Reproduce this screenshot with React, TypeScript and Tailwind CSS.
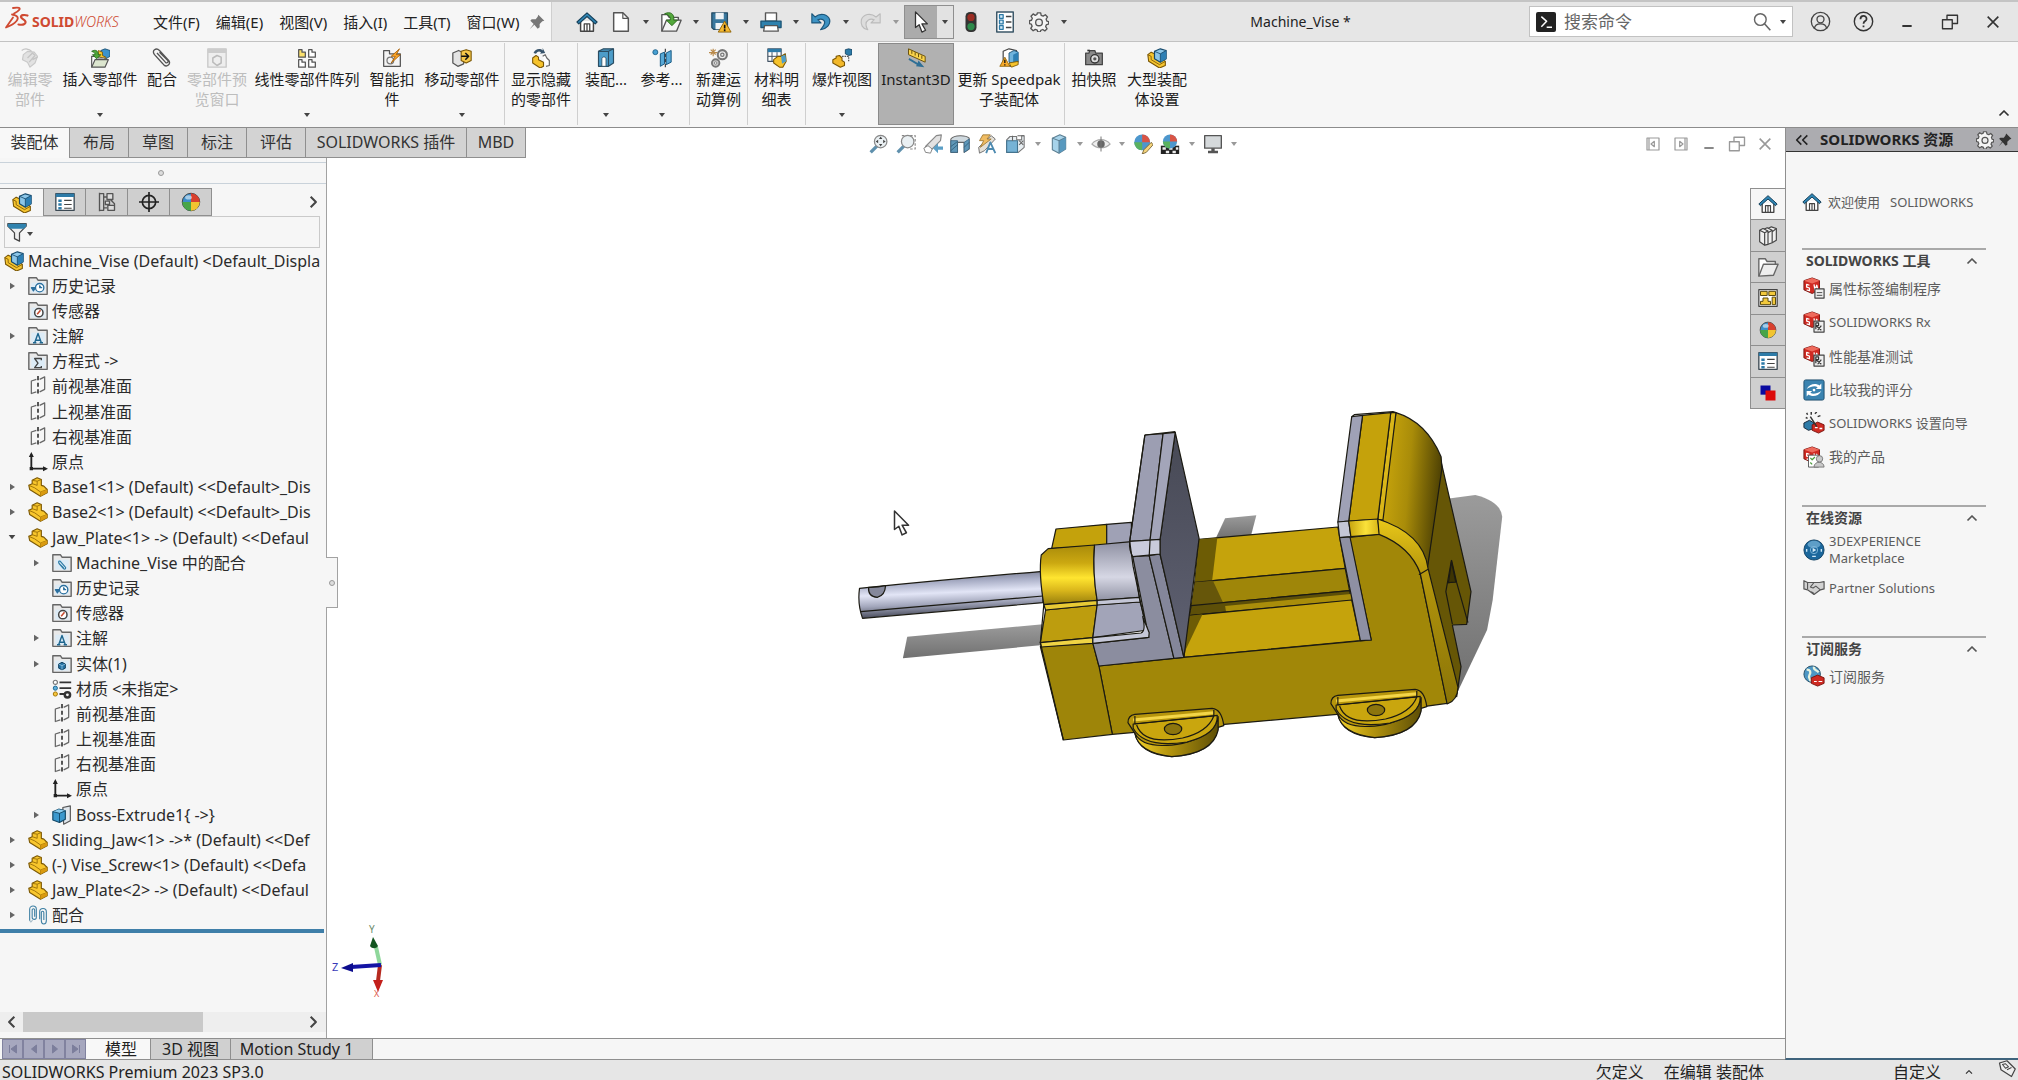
import React from "react";
import type { ReactNode } from "react";

/* ---------- icon primitives ---------- */

function Ico({ children, s = "size-5", vb = "0 0 24 24" }: { children: ReactNode; s?: string; vb?: string }) {
  return (
    <svg viewBox={vb} className={`${s} shrink-0`} fill="none" strokeLinejoin="round" aria-hidden="true">
      {children}
    </svg>
  );
}

const Caret = ({ dim = false }: { dim?: boolean }) => (
  <svg viewBox="0 0 6 4" className="h-1 w-1.5 shrink-0" aria-hidden="true">
    <path d="M0 0h6L3 4z" fill={dim ? "#999" : "#444"} />
  </svg>
);

const House = ({ s }: { s?: string }) => (
  <Ico s={s}>
    <path d="M5 11v11h14V11" fill="#fff" stroke="#444" strokeWidth="1.6" />
    <path d="M9 22v-8h6v8M12 14v8" stroke="#444" strokeWidth="1.4" />
    <path d="M12 2 1 12l2 2 9-8 9 8 2-2z" fill="#2f86b5" stroke="#17405a" strokeWidth="1.2" />
  </Ico>
);

const Asm = ({ s }: { s?: string }) => (
  <Ico s={s}>
    <path d="M1 8 5 5l4 2v5l6 4 4-2 3 2v5l-7 3L2 16z" fill="#f6c52f" stroke="#7a5604" strokeWidth="1.3" />
    <path d="M1 8l4 2v4l10 6 7-4" stroke="#7a5604" strokeWidth="1" />
    <path d="M9 4l7-3 7 2v10l-7 4-7-4z" fill="#8cc6e8" stroke="#174a6c" strokeWidth="1.4" />
    <path d="M16 7l7-4v10l-7 4z" fill="#2d7fb4" />
    <path d="M9 4l7 3 7-4M16 7v10" stroke="#174a6c" strokeWidth="1" />
  </Ico>
);

const Part = ({ s }: { s?: string }) => (
  <Ico s={s}>
    <path d="M1 10l4-2V4l6-3 5 2v7l3 1 4 4v4l-8 4L2 15z" fill="#f8c62c" stroke="#7d5a06" strokeWidth="1.4" />
    <path d="M1 10l7 3 7 5v5M5 8l6 2V5l5-2M5 4l6 1M15 18l8-3" stroke="#9a7008" strokeWidth="1.1" />
    <path d="M15 18l8-3v4l-8 4z" fill="#d99a10" />
  </Ico>
);

const Folder = ({ children, s }: { children?: ReactNode; s?: string }) => (
  <Ico s={s}>
    <path d="M1 2h9l2 3h11v17H1z" fill="#e9e9e9" stroke="#666" strokeWidth="1.7" />
    <path d="M4 8h16v12H4z" fill="#dcebf6" />
    {children}
  </Ico>
);
const FHistory = () => (
  <Folder>
    <circle cx="14" cy="14" r="5" fill="#fff" stroke="#2b6f9e" strokeWidth="1.6" />
    <path d="M14 11v3h3M4 14h5l-2.500 4z" stroke="#2b6f9e" strokeWidth="1.4" fill="#2b6f9e" />
  </Folder>
);
const FSensor = () => (
  <Folder>
    <circle cx="13" cy="14" r="5" fill="#fff" stroke="#444" strokeWidth="1.8" />
    <path d="M11 16l4-5" stroke="#c4482c" strokeWidth="1.8" />
  </Folder>
);
const FNote = () => (
  <Folder>
    <path d="M8 20l4-11 4 11M9.500 17h5M6 20h4M14 20h4" stroke="#20678f" strokeWidth="1.7" />
  </Folder>
);
const FEq = () => (
  <Folder>
    <path d="M16 11V9H8l4 5.500L8 20h8v-2" stroke="#444" strokeWidth="1.6" />
  </Folder>
);
const FMate = () => (
  <Folder>
    <path d="M8 12l6 7c2 1 3-1 2-2l-6-7c-2-1-3 1-1 3l5 5" stroke="#2b7aa5" strokeWidth="1.4" />
  </Folder>
);
const FBody = () => (
  <Folder>
    <path d="M8 12l4-2 4 2v5l-4 2-4-2z" fill="#2473a6" stroke="#12405f" strokeWidth="1.2" />
    <path d="M8 12l4 2 4-2M12 14v5" stroke="#a8d4ee" strokeWidth=".8" />
  </Folder>
);
const Plane = () => (
  <Ico>
    <path d="M10 4 4 6v15l6-2M14 4l6-3v15l-6 3" stroke="#666" strokeWidth="1.5" />
    <path d="M12 0v24" stroke="#222" strokeWidth="1.8" strokeDasharray="5 3" />
  </Ico>
);
const Origin = () => (
  <Ico>
    <path d="M4 3v17h17" stroke="#222" strokeWidth="2.200" />
    <path d="M4 0 1 6h6zM24 20l-6-3v6zM2 18h4v4H2z" fill="#222" />
  </Ico>
);
const Material = () => (
  <Ico>
    <path d="M9 4h14M9 11h14M9 18h6" stroke="#333" strokeWidth="2.200" />
    <circle cx="4" cy="4" r="2.500" stroke="#777" strokeWidth="1.4" fill="#fff" />
    <circle cx="4" cy="11" r="2.500" fill="#5fb0da" stroke="#206a96" strokeWidth="1.2" />
    <circle cx="4" cy="18" r="2.500" fill="#f7c63c" stroke="#a67808" strokeWidth="1.2" />
    <circle cx="18.500" cy="19" r="3.200" stroke="#333" strokeWidth="3" />
  </Ico>
);
const Extrude = () => (
  <Ico>
    <path d="M13 3l9-2v18l-8 4z" fill="#dfe6ec" stroke="#555" strokeWidth="1.4" />
    <path d="M1 8l7-3 8 2v10l-7 4-8-3z" fill="#3b98cd" stroke="#134867" strokeWidth="1.4" />
    <path d="M1 8l7-3 8 2-7 3z" fill="#8acbee" />
    <path d="M1 8l8 2 7-3M9 10v11" stroke="#134867" strokeWidth="1.1" />
  </Ico>
);
const Mates = () => (
  <Ico>
    <path d="M2 19V5c0-5 8-5 8 0v10c0 3-5 3-5 0V6c0-2 3-2 3 0v8" stroke="#3d7fa3" strokeWidth="1.3" />
    <path d="M2 18c0 3 3 3 3 0" stroke="#8aa7b8" strokeWidth="1.2" />
    <path d="M14 8c0-5 8-5 8 0v11c0 5-6 5-6 0V9c0-2 3-2 3 0v9M14 8v9" stroke="#3d7fa3" strokeWidth="1.3" />
  </Ico>
);

const ListBox = ({ s }: { s?: string }) => (
  <Ico s={s}>
    <path d="M1 2h22v20H1z" fill="#fff" stroke="#3d4a54" strokeWidth="1.6" />
    <path d="M1 2h22v4H1z" fill="#2d7ba8" />
    <path d="M4 9h4v3H4zM4 13.500h4v3H4zM4 18h4v3H4z" fill="#2d7ba8" />
    <path d="M11 10h9M11 15h9M11 19.500h9" stroke="#444" strokeWidth="1.4" />
  </Ico>
);
const Ball = ({ s }: { s?: string }) => (
  <Ico s={s}>
    <circle cx="12" cy="12" r="10.500" fill="#3d8ec9" stroke="#333" />
    <path d="M12 12V1.500A10.500 10.500 0 0 1 22.500 12z" fill="#d8402e" />
    <path d="M12 12h10.500A10.500 10.500 0 0 1 12 22.500z" fill="#f2c430" />
    <path d="M12 12v10.500A10.500 10.500 0 0 1 1.500 12z" fill="#48a548" />
    <ellipse cx="9" cy="6.500" rx="4" ry="2.500" fill="#fff" opacity=".55" />
  </Ico>
);
const Config = () => (
  <Ico>
    <path d="M3 1v22M3 2h5v20H3M8 6h4M8 19h4" stroke="#555" strokeWidth="1.6" />
    <path d="M12 2h7v7h-7zM10 11h5v4h-5zM13 16h8v6h-8zM16 9l5 5v2" fill="#ddd" stroke="#555" strokeWidth="1.6" />
  </Ico>
);
const Target = () => (
  <Ico>
    <circle cx="12" cy="12" r="8" stroke="#222" strokeWidth="2" />
    <path d="M12 0v24M0 12h24" stroke="#222" strokeWidth="2" />
  </Ico>
);
const Gear = ({ s }: { s?: string }) => (
  <Ico s={s}>
    <path
      d="M10 1h4l.6 3 2.400 1 2.600-1.700 2.600 2.700L20.500 8.500l1 2.500 2 .5v3l-2.500.6-1 2.400 1.700 2.600-2.700 2.600L16.500 21l-2.400 1-.6 2h-3l-.6-2.200-2.400-1L5 22.500 2.200 19.700 3.800 17l-1-2.400L.5 14v-3.500l2.500-.6 1-2.400L2.400 5 5 2.300 7.500 4 9.500 3z"
      fill="#f4f4f4"
      stroke="#555"
      strokeWidth="1.6"
    />
    <circle cx="12" cy="12.500" r="4" fill="#eee" stroke="#555" strokeWidth="1.6" />
  </Ico>
);
const Pin = ({ c = "#777", s = "size-4" }: { c?: string; s?: string }) => (
  <Ico s={s}>
    <path d="M14 1l9 9-3 1-4 4v5l-3 2-5-6-7 7 6-8-5-5 2-2h6l3-4z" fill={c} />
  </Ico>
);
const Cursor = ({ s }: { s?: string }) => (
  <Ico s={s}>
    <path d="M6 1v17l4-3 3 8 4-2-4-7h6z" fill="#fff" stroke="#333" strokeWidth="1.4" />
  </Ico>
);
const ChevR = () => (
  <Ico s="size-3.5">
    <path d="M8 3l9 9-9 9" stroke="#444" strokeWidth="3.500" />
  </Ico>
);
const ChevL = () => (
  <Ico s="size-3.5">
    <path d="M16 3l-9 9 9 9" stroke="#444" strokeWidth="3.500" />
  </Ico>
);
const ChevUp = ({ c = "#555", s = "size-3" }: { c?: string; s?: string }) => (
  <Ico s={s}>
    <path d="M3 17l9-9 9 9" stroke={c} strokeWidth="3.500" />
  </Ico>
);

/* ---------- quick access icons ---------- */

const NewDoc = () => (
  <Ico s="size-[22px]">
    <path d="M4 2h10l6 6v14H4z" fill="#fff" stroke="#555" strokeWidth="1.6" />
    <path d="M14 2v6h6" stroke="#555" strokeWidth="1.3" />
  </Ico>
);
const OpenDoc = () => (
  <Ico s="size-[22px]">
    <path d="M2 22V4h6l2 3h10v4" fill="#fff" stroke="#555" strokeWidth="1.5" />
    <path d="M2 22 7 10h16l-5 12z" fill="#f4f4f4" stroke="#555" strokeWidth="1.5" />
    <path d="M5 3c6-3 11 0 10 7h4l-6 6-6-6h4c1-3-1-6-6-7z" fill="#54a83c" stroke="#2b6b1d" />
  </Ico>
);
const Save = () => (
  <Ico s="size-[22px]">
    <path d="M2 2h17v18H4l-2-2z" fill="#39789e" stroke="#234b63" strokeWidth="1.4" />
    <path d="M6 2h9v7H6zM6 13h9v7H6z" fill="#eef3f6" />
    <path d="M16 11l7 12H9z" fill="#f7b92f" stroke="#8f6407" />
    <path d="M16 15v4M16 20v2" stroke="#111" strokeWidth="1.8" />
  </Ico>
);
const Print = () => (
  <Ico s="size-[22px]">
    <path d="M6 2h12v9H6z" fill="#fff" stroke="#555" strokeWidth="1.5" />
    <path d="M1 11h22v7H1z" fill="#2f82ae" stroke="#1b5475" strokeWidth="1.4" />
    <path d="M5 16h14l1 6H4z" fill="#fff" stroke="#555" strokeWidth="1.4" />
  </Ico>
);
const Undo = () => (
  <Ico s="size-[22px]">
    <path d="M2 3v10h10L8.500 9.500c5-2 9 1 7 5-1 3-3 4-4 6 7-1 11-6 10-11-2-6-10-8-16-3z" fill="#3d93c4" stroke="#1c567a" strokeWidth="1.2" />
  </Ico>
);
const Redo = () => (
  <Ico s="size-[22px]">
    <path d="M22 3v10H12l3.500-3.500c-5-2-9 1-9 5 0 3 1 4 2 6-6-1-8-6-7-11 2-6 10-8 16-3z" fill="#ddd" stroke="#bbb" strokeWidth="1.2" />
  </Ico>
);
const Traffic = () => (
  <Ico s="size-[22px]">
    <rect x="6" y="1" width="12" height="22" rx="5" fill="#333" />
    <circle cx="12" cy="7" r="4" fill="#9c2d24" />
    <circle cx="12" cy="17" r="4" fill="#2e8a4b" />
  </Ico>
);
const OptList = () => (
  <Ico s="size-[22px]">
    <path d="M3 1h18v22H3z" fill="#fff" stroke="#3b5768" strokeWidth="1.6" />
    <path d="M6 4h4v4H6zM6 10h4v4H6zM6 16h4v4H6z" fill="#d5ebf7" stroke="#2b79a6" strokeWidth="1.4" />
    <path d="M13 6h6M13 12h6M13 18h6" stroke="#444" strokeWidth="1.8" />
  </Ico>
);

/* ---------- ribbon icons ---------- */

const IEdit = () => (
  <Ico>
    <path d="M4 8l5-4 8 1 4 5-3 8-6 5-3-6-6-3z" fill="#e2e2e2" stroke="#c9c9c9" strokeWidth="1.4" />
    <path d="M2 3c4-3 9-2 12 1M9 12l6-6 3 3-7 8M15 14l6-3" stroke="#c4c4c4" strokeWidth="1.5" />
  </Ico>
);
const IInsert = () => (
  <Ico>
    <path d="M13 3l5-2 6 2v7l-5 3-6-3z" fill="#3b93cb" stroke="#174a6c" />
    <path d="M10 3l5 2v4l4 2v3l-9-4z" fill="#f5c42d" stroke="#7a5604" />
    <path d="M2 23V10h6l2 2h8v3" fill="#fff" stroke="#555" strokeWidth="1.4" />
    <path d="M2 23l4-9h16l-4 9z" fill="#dce6cf" stroke="#555" strokeWidth="1.4" />
    <path d="M2 4c5-3 8 0 8 4h3l-5 5-5-5h3c0-2-1-3-4-4z" fill="#4fa63a" stroke="#24651a" />
  </Ico>
);
const IClip = () => (
  <Ico>
    <path d="M5 10l9 10c4 4 9-1 6-5L9 3C5-1-1 3 3 8l10 11M6 6l10 11c2 2 4 0 3-2L9 5" stroke="#555" strokeWidth="1.6" />
  </Ico>
);
const IPreview = () => (
  <Ico>
    <path d="M1 1h22v22H1z" fill="#eee" stroke="#c8c8c8" strokeWidth="1.6" />
    <path d="M1 1h22v5H1z" fill="#ccc" />
    <path d="M7 12l5-3 5 2v7l-5 3-5-4z" stroke="#bbb" strokeWidth="1.8" />
  </Ico>
);
const IPattern = () => (
  <Ico>
    <path d="M2 2h4v3h4v6H2z" fill="#fbe06c" stroke="#555" strokeWidth="1.5" />
    <path d="M14 2h4v3h4v6h-8zM2 14h4v3h4v6H2zM14 14h4v3h4v6h-8z" fill="#fff" stroke="#555" strokeWidth="1.5" />
  </Ico>
);
const ISmart = () => (
  <Ico>
    <path d="M2 3h7v4h13v15H2z" fill="#f4f4f4" stroke="#555" strokeWidth="1.5" />
    <circle cx="10" cy="15" r="4" stroke="#777" strokeWidth="1.5" />
    <path d="M21 1 11 10h5l-5 8 11-10h-5z" fill="#ffa92a" stroke="#a45c05" />
  </Ico>
);
const IMove = () => (
  <Ico>
    <path d="M1 6l7-3 6 3v13l-7 3-6-4z" fill="#e4e4e4" stroke="#555" strokeWidth="1.5" />
    <path d="M11 4l6-2 6 2v11l-6 3-6-3z" fill="#f6c84a" stroke="#7a5604" strokeWidth="1.3" />
    <path d="M11 10h8M16 6l4 4-4 4" stroke="#111" strokeWidth="1.8" />
  </Ico>
);
const IShow = () => (
  <Ico>
    <path d="M3 6c2-5 8-6 11-3V0l3 6-6 1 1-2c-3-2-5 0-6 2z" fill="#37536b" />
    <path d="M2 12l4-3 3 2v3l6 3v5l-4 2-9-6z" fill="#f6c32c" stroke="#7a5604" strokeWidth="1.3" />
    <path d="M14 10l3-2 2 4 3 3v6l-4 1" fill="#fff" stroke="#666" strokeWidth="1.4" />
  </Ico>
);
const IFeat = () => (
  <Ico>
    <path d="M3 4l6-3h12v17l-6 4H3z" fill="#4d9dc9" stroke="#2b4d62" strokeWidth="1.4" />
    <path d="M3 4h12v18M15 4l6-3" stroke="#2b4d62" strokeWidth="1.3" />
    <path d="M7 22v-9c0-3 5-3 5 0v9z" fill="#fff" stroke="#2b4d62" />
  </Ico>
);
const IRef = () => (
  <Ico>
    <circle cx="4" cy="5" r="3" fill="#47a0d2" stroke="#1b5d86" />
    <path d="M10 7l5-2v14l-5 3zM17 6l6-3v14l-6 3z" fill="#58a9d7" stroke="#1b5d86" strokeWidth="1.2" />
    <path d="M16 1v23" stroke="#333" strokeDasharray="4 2" strokeWidth="1.3" />
  </Ico>
);
const IMotion = () => (
  <Ico>
    <circle cx="16" cy="8" r="5.500" fill="#eee" stroke="#777" strokeWidth="2.500" />
    <circle cx="16" cy="8" r="2" stroke="#777" strokeWidth="1.5" />
    <circle cx="8" cy="18" r="4.500" fill="#ccc" stroke="#777" strokeWidth="2.200" />
    <circle cx="8" cy="18" r="1.500" fill="#fff" stroke="#777" />
    <path d="M5 1v9M0 5.500h10M2 2l6 6M8 2 2 8" stroke="#b98a4b" strokeWidth="1.4" />
  </Ico>
);
const IBom = () => (
  <Ico>
    <path d="M1 1h16v15H1z" fill="#fff" stroke="#456" strokeWidth="1.4" />
    <path d="M1 1h16v4H1z" fill="#2d7ba8" />
    <path d="M1 10h16M6 5v11M12 5v11" stroke="#456" strokeWidth="1.2" />
    <path d="M8 14l5-4 4 0 5-3 1 9-4 7-4 0-7-5z" fill="#f6c32c" stroke="#7a5604" strokeWidth="1.3" />
    <path d="M17 10l5-2 1 8-5 3z" fill="#4d9dc9" />
  </Ico>
);
const IExplode = () => (
  <Ico>
    <path d="M1 14l4-2v-2l4-1 3 3v3l3 2v4l-5 2-9-5z" fill="#f2b82a" stroke="#7a5604" strokeWidth="1.3" />
    <path d="M16 2l4-1 4 1v6l-4 1-4-2z" fill="#2d7ba8" stroke="#12405f" />
    <path d="M12 10h8v7" stroke="#555" strokeDasharray="2 1" strokeWidth="1.5" />
  </Ico>
);
const IInstant = () => (
  <Ico>
    <path d="M3 1l20 9v7L3 8z" fill="#fbd44a" stroke="#6b5310" strokeWidth="1.2" />
    <path d="M7 3v4M11 5v4M15 7v4M19 9v4" stroke="#6b5310" strokeWidth="1.2" />
    <path d="M4 12l10 6 1-3 7 8-10-1 1-2-10-6z" fill="#2f6f96" />
  </Ico>
);
const ISpeed = () => (
  <Ico>
    <path d="M5 4l7-3 9 2v14l-7 5-9-4z" fill="#fff" stroke="#444" strokeWidth="1.4" />
    <path d="M12 6l6-3 5 2v12l-6 2-5-2z" fill="#6fb3dc" stroke="#174a6c" />
    <path d="M17 8l6-3v12l-6 2z" fill="#2d7fb4" />
    <path d="M12 18l11-2v4l-8 3z" fill="#f5c32c" stroke="#7a5604" />
    <path d="M7 11l6 11H1z" fill="#f7a928" stroke="#8f6407" />
    <path d="M7 14v4M7 19.500v1.500" stroke="#111" strokeWidth="1.6" />
  </Ico>
);
const ICamera = () => (
  <Ico>
    <path d="M2 6h4l1-3h6l1 3h8v14H2z" fill="#8a8a8a" stroke="#444" strokeWidth="1.5" />
    <path d="M4 3h3" stroke="#333" strokeWidth="2" />
    <circle cx="13" cy="13" r="5" fill="#ddd" stroke="#333" strokeWidth="1.6" />
    <circle cx="13" cy="13" r="2" fill="#555" />
  </Ico>
);

/* ---------- heads-up view icons ---------- */

const Mag = ({ area = false }: { area?: boolean }) => (
  <Ico>
    {area && <path d="M7 2h16v16h-6" stroke="#888" strokeDasharray="3 2" strokeWidth="1.4" />}
    <path d="M10 14l-8 8" stroke="#5f90ad" strokeWidth="4" />
    <circle cx="14" cy="9" r="7.500" fill="#eaf0f3" stroke="#888" strokeWidth="1.5" />
    {!area && <path d="M14 3l2 3h-4zM14 15l2-3h-4zM8 9l3-2v4zM20 9l-3-2v4z" fill="#444" />}
  </Ico>
);
const HPrev = () => (
  <Ico>
    <path d="M3 15 16 2l6-1-1 7L9 20z" fill="#e2e2e2" stroke="#888" strokeWidth="1.4" />
    <path d="M1 17l5-3 5 4-2 5-6-1z" fill="#fff" stroke="#888" strokeWidth="1.2" />
    <path d="M24 15h-6v-4l-6 6 6 6v-4h6z" fill="#5b9fc6" />
  </Ico>
);
const HSection = () => (
  <Ico>
    <path d="M1 6c4-5 18-5 22-1v13l-6 4V10H9v12H1z" fill="#cfd9df" stroke="#666" strokeWidth="1.3" />
    <path d="M1 8h8v14H1zM17 10l6-4v12l-6 4z" fill="#5f97b8" stroke="#3a6885" />
    <path d="M1 15l8-6M1 20l8-7M17 16l6-6" stroke="#2d5d7a" />
  </Ico>
);
const HAnno = () => (
  <Ico>
    <path d="M2 16 17 2l5 4L9 20l-6 3z" fill="#e4e0d8" stroke="#777" strokeWidth="1.2" />
    <path d="M7 1h9l-4 5h5L4 16l4-8H3z" fill="#f0bc62" stroke="#9a7530" />
    <path d="M11 23l5-13 6 13M13 18h7" stroke="#4c8ab0" strokeWidth="2.200" />
  </Ico>
);
const HOrient = () => (
  <Ico>
    <path d="M2 7l4-4h8v4h6V2h3v14l-7 6H2z" fill="#e7eef2" stroke="#777" strokeWidth="1.3" />
    <path d="M2 8h13v14H2z" fill="#76b3d6" stroke="#44748f" strokeWidth="1.3" />
    <path d="M9 8V2M15 2h8M17 8l5 5M22 8l-5 5" stroke="#666" strokeWidth="1.3" />
  </Ico>
);
const HCube = () => (
  <Ico>
    <path d="M4 5l9-4 7 3v14l-8 5-8-4z" fill="#a7d3ea" stroke="#5c7f92" strokeWidth="1.3" />
    <path d="M12 8l8-4v14l-8 5z" fill="#5899bf" />
    <path d="M4 5l8 3 8-4M12 8v15" stroke="#5c7f92" strokeWidth="1.2" />
  </Ico>
);
const HEye = () => (
  <Ico>
    <path d="M1 12c6-7 16-7 22 0-6 6-16 6-22 0z" fill="#eee" stroke="#aaa" strokeWidth="1.3" />
    <circle cx="12" cy="12" r="4.500" fill="#666" />
    <path d="M12 3v18" stroke="#777" strokeWidth="1.2" />
  </Ico>
);
const HAppear = () => (
  <Ico>
    <circle cx="11" cy="10" r="9.500" fill="#4d97cd" />
    <path d="M11 10V.5A9.500 9.500 0 0 1 20.500 10z" fill="#d95445" />
    <path d="M11 10v9.500A9.500 9.500 0 0 1 1.500 10z" fill="#5ab160" />
    <path d="M22 10l2 3-8 9-5 2 2-5z" fill="#f5d47c" stroke="#6e5a2a" />
  </Ico>
);
const HScene = () => (
  <Ico>
    <path d="M1 14h22v10H1z" fill="#222" />
    <path d="M3 16h4v3H3zM11 16h4v3h-4zM19 16h3v3h-3zM7 20h4v3H7zM15 20h4v3h-4z" fill="#eee" />
    <circle cx="12" cy="9" r="8.500" fill="#4d97cd" />
    <path d="M12 9V.5A8.500 8.500 0 0 1 20.500 9z" fill="#d95445" />
    <path d="M12 9v8.500A8.500 8.500 0 0 1 3.500 9z" fill="#5ab160" />
  </Ico>
);
const HScreen = () => (
  <Ico>
    <path d="M2 2h20v15H2z" fill="#d5d9db" stroke="#555" strokeWidth="1.6" />
    <path d="M10 17h4v3h4v3H6v-3h4z" fill="#555" />
  </Ico>
);

/* ---------- task pane icons ---------- */

const Books = () => (
  <Ico>
    <path d="M12 3l4-2 6 2v14l-5 3" fill="#f0f0f0" stroke="#444" strokeWidth="1.4" />
    <path d="M7 4l4-2 6 3v15l-5 2" fill="#f0f0f0" stroke="#444" strokeWidth="1.4" />
    <path d="M2 5l4-2 6 3v16l-4 1-6-4z" fill="#f0f0f0" stroke="#444" strokeWidth="1.4" />
    <path d="M2 5l6 3v15M8 8l4-2M12 8l5-3M17 7l5-4" stroke="#444" strokeWidth="1.4" />
  </Ico>
);
const OpenFolder = () => (
  <Ico s="size-[22px]">
    <path d="M2 22V3h7l2 3h9v3" fill="#fff" stroke="#666" strokeWidth="1.5" />
    <path d="M2 22 7 9h16l-5 12z" fill="#eee" stroke="#666" strokeWidth="1.5" />
  </Ico>
);
const Palette = () => (
  <Ico>
    <path d="M1 2h22v20H1z" fill="#fff" stroke="#444" strokeWidth="1.5" />
    <path d="M3 4h8v5H3zM13 4h8v5h-8zM6 12h6v4h3v4H3v-4h3zM17 11h4v9h-4z" fill="#f2c93c" stroke="#5a4a10" strokeWidth="1.2" />
  </Ico>
);
const Squares = () => (
  <Ico>
    <path d="M3 3h12v11H3z" fill="#0a0aa0" />
    <path d="M9 9h12v12H9z" fill="#dc0a0a" />
  </Ico>
);
const SwCube = ({ children }: { children?: ReactNode }) => (
  <Ico s="size-[22px]">
    <path d="M1 4l9-3 8 3v10l-8 4-9-4z" fill="#cf2a22" stroke="#7a120d" />
    <path d="M1 4l9 3 8-3-8-3z" fill="#ee6a5c" />
    <path d="M7 9 4 8v3l3 1v3l-3-1M12 8l1 6 2-5 1 4" stroke="#fff" strokeWidth="1.4" />
    {children}
  </Ico>
);
const SwTag = () => (
  <SwCube>
    <path d="M13 13h10v10H13z" fill="#eee" stroke="#444" strokeWidth="1.3" />
    <path d="M15 17h6M15 20h6" stroke="#444" />
  </SwCube>
);
const SwRx = () => (
  <SwCube>
    <path d="M12 11h11v12H12z" fill="#eee" stroke="#444" strokeWidth="1.3" />
    <path d="M14 20v-7h3v3h-3l6 5M20 16l-4 5" stroke="#333" strokeWidth="1.3" />
  </SwCube>
);
const SwWiz = () => (
  <Ico s="size-[22px]">
    <path d="M1 12l6-3 5 3v6l-6 2-5-3z" fill="#2d7ba8" stroke="#123" />
    <path d="M10 14l6-3 7 3v6l-6 3-7-3z" fill="#cf2a22" stroke="#7a120d" />
    <path d="M13 17h3M18 18h3" stroke="#fff" strokeWidth="1.4" />
    <path d="M8 5l7 11M4 1l1 2M9 0v3M13 2l2-2M16 5l3-1M3 6l2 1" stroke="#333" strokeWidth="1.6" />
  </Ico>
);
const SwUser = () => (
  <SwCube>
    <path d="M6 10h11v13H6z" fill="#fff" stroke="#555" />
    <path d="M8 13l2 2 3-3M8 18l2 2" stroke="#4a9a3a" strokeWidth="1.3" />
    <circle cx="18" cy="14" r="3.500" fill="#c9c9c9" stroke="#777" />
    <path d="M12 23c0-7 11-7 11 0z" fill="#c9c9c9" stroke="#777" />
  </SwCube>
);
const Compare = () => (
  <Ico s="size-[22px]">
    <rect x="1" y="1" width="22" height="22" rx="2" fill="#3a83b0" stroke="#1c4d6c" />
    <path d="M4 11c3-6 10-7 14-4l2-2v6h-6l2-2c-3-2-7-1-12 2zM20 13c-3 6-10 7-14 4l-2 2v-6h6l-2 2c3 2 7 1 12-2z" fill="#fff" />
    <circle cx="12" cy="12" r="1.500" fill="#fff" />
  </Ico>
);
const Globe = () => (
  <Ico s="size-[22px]">
    <circle cx="12" cy="12" r="11" fill="#1b679c" stroke="#0f3f63" />
    <ellipse cx="12" cy="6" rx="7" ry="4" fill="#8cc3e4" opacity=".6" />
    <circle cx="12" cy="12" r="4" stroke="#7fb6d9" />
    <path d="M10.500 9.500v5l4-2.500z" fill="#cfe8f7" />
    <path d="M4 11v3M20 11v3M10 19h4" stroke="#cfe8f7" strokeWidth="1.5" />
  </Ico>
);
const Hands = () => (
  <Ico s="size-[22px]">
    <path d="M1 4l4 2 6 0 7 0 5-1v8l-4 1-7 5-7-5-4-1z" fill="#d2d2d2" stroke="#555" strokeWidth="1.3" />
    <path d="M12 6l-4 5 3 1 3-2 5 4M9 16l3 2M5 6v7" stroke="#555" strokeWidth="1.2" />
  </Ico>
);
const GlobeSw = () => (
  <Ico s="size-[22px]">
    <circle cx="10" cy="10" r="9" fill="#4d97c5" stroke="#234b63" />
    <path d="M4 5c4 0 5 3 3 6s2 5 1 7M12 2c-1 4 3 3 5 6" stroke="#e8f3e0" strokeWidth="2.500" />
    <path d="M9 14l7-3 7 3v6l-7 3-7-3z" fill="#cf2a22" stroke="#7a120d" />
    <path d="M12 18h3M17 18h4" stroke="#fff" strokeWidth="1.3" />
  </Ico>
);

const WinMin = ({ c }: { c: string }) => (
  <Ico s="size-4">
    <path d="M5 18h14" stroke={c} strokeWidth="3" />
  </Ico>
);
const WinRestore = ({ c }: { c: string }) => (
  <Ico s="size-[18px]">
    <path d="M8 9V3h14v11h-7M2 9h13v12H2z" stroke={c} strokeWidth="1.8" />
  </Ico>
);
const WinClose = ({ c }: { c: string }) => (
  <Ico s="size-4">
    <path d="M4 4l16 16M20 4 4 20" stroke={c} strokeWidth="2.400" />
  </Ico>
);

/* ---------- title bar ---------- */

const menus = ["文件(F)", "编辑(E)", "视图(V)", "插入(I)", "工具(T)", "窗口(W)"];

function QBtn({ label, w = "w-[34px]", children }: { label: string; w?: string; children: ReactNode }) {
  return (
    <button type="button" aria-label={label} className={`${w} flex h-8 shrink-0 items-center justify-center`}>
      {children}
    </button>
  );
}
const Drop = ({ dim = false }: { dim?: boolean }) => (
  <button type="button" aria-label="更多" className="flex h-8 w-4 shrink-0 items-center justify-center">
    <Caret dim={dim} />
  </button>
);

function TitleBar() {
  return (
    <header className="flex h-[42px] items-stretch border-t-2 border-b border-t-[#c4c4c4] border-b-[#c2c2c2] bg-[#e6e6e6]">
      <div className="flex w-[552px] shrink-0 items-center border-r border-[#cfcfcf] bg-[#f6f6f6] pl-1">
        <svg viewBox="0 0 26 24" className="mb-2 h-6 w-[26px]" fill="none" stroke="#cf4a32" strokeLinecap="round" strokeLinejoin="round" aria-hidden="true">
          <path d="M9 2c6-1 8 0 6 2-1 1.500-3 2.500-5 3.500" strokeWidth="1.8" />
          <path d="M8 8.500c6 1 7 3.500 4.500 6.500C10 18 6 20 2 21.500L9 11.500" strokeWidth="1.8" />
          <path d="M23.500 9.500c-3-1-7-.5-6.500 1.500.5 2.500 5 2.500 4.500 5.500-.5 2-4 2.500-7 2" strokeWidth="2.200" />
        </svg>
        <span className="w-[95px] pl-0.5 text-sm leading-5 text-[#cf4a32]">
          <b>SOLID</b>
          <i className="font-light">WORKS</i>
        </span>
        <nav className="flex gap-4 pl-7 text-[15px] leading-5">
          {menus.map((m) => (
            <button type="button" key={m} className="whitespace-nowrap">
              {m}
            </button>
          ))}
        </nav>
        <span className="ml-auto pr-1.5">
          <Pin />
        </span>
      </div>
      <div className="flex items-center pl-[18px]">
        <QBtn label="主页"><House s="size-[22px]" /></QBtn>
        <QBtn label="新建"><NewDoc /></QBtn>
        <Drop />
        <QBtn label="打开"><OpenDoc /></QBtn>
        <Drop />
        <QBtn label="保存"><Save /></QBtn>
        <Drop />
        <QBtn label="打印"><Print /></QBtn>
        <Drop />
        <QBtn label="撤消"><Undo /></QBtn>
        <Drop />
        <QBtn label="重做"><Redo /></QBtn>
        <Drop dim />
        <div className="flex border border-[#8f8f8f] bg-[#e2e2e2]">
          <button type="button" aria-label="选择" className="flex h-8 w-8 items-center justify-center bg-[#ababab]">
            <Cursor s="size-[22px]" />
          </button>
          <Drop />
        </div>
        <QBtn label="重建模型"><Traffic /></QBtn>
        <QBtn label="文件属性"><OptList /></QBtn>
        <QBtn label="选项"><Gear s="size-5" /></QBtn>
        <Drop />
      </div>
      <div className="flex flex-1 items-center justify-center text-sm">
        <h1 className="whitespace-nowrap">Machine_Vise *</h1>
      </div>
      <div className="flex items-center">
        <label className="flex h-[31px] w-[264px] items-center border border-[#c2c2c2] bg-white px-1.5">
          <span className="flex size-5 shrink-0 items-center justify-center rounded-xs bg-[#222]">
            <Ico s="size-4">
              <path d="M5 4l8 7-8 8M13 20h8" stroke="#fff" strokeWidth="2.200" />
            </Ico>
          </span>
          <input aria-label="搜索命令" placeholder="搜索命令" className="w-full min-w-0 px-2 text-[17px] leading-6 outline-none placeholder:text-[#666]" />
          <Ico s="size-5">
            <circle cx="10" cy="9" r="7" stroke="#666" strokeWidth="1.7" />
            <path d="M15 14l7 8" stroke="#666" strokeWidth="1.9" />
          </Ico>
          <span className="pl-2"><Caret /></span>
        </label>
        <div className="flex items-center pr-1 pl-1.5">
          <QBtn w="w-[43px]" label="登录">
            <Ico s="size-[21px]">
              <circle cx="12" cy="12" r="10.500" stroke="#444" strokeWidth="1.5" />
              <circle cx="12" cy="9.500" r="4" stroke="#444" strokeWidth="1.5" />
              <path d="M5 20c1-7 13-7 14 0" stroke="#444" strokeWidth="1.5" />
            </Ico>
          </QBtn>
          <QBtn w="w-[43px]" label="帮助">
            <Ico s="size-[21px]">
              <circle cx="12" cy="12" r="10.500" stroke="#333" strokeWidth="1.6" />
              <path d="M8.500 9.500c0-5 7-5 7-.5 0 2.500-3.500 2.500-3.500 5.500M12 16.500v2" stroke="#333" strokeWidth="2" />
            </Ico>
          </QBtn>
          <QBtn w="w-[43px]" label="最小化"><WinMin c="#333" /></QBtn>
          <QBtn w="w-[43px]" label="还原"><WinRestore c="#333" /></QBtn>
          <QBtn w="w-[43px]" label="关闭"><WinClose c="#333" /></QBtn>
        </div>
      </div>
    </header>
  );
}

/* ---------- ribbon ---------- */

type Cmd = { icon: ReactNode; lines: string[]; w: string; drop?: boolean; off?: boolean; on?: boolean };
const groups: Cmd[][] = [
  [
    { icon: <IEdit />, lines: ["编辑零", "部件"], w: "w-[60px]", off: true },
    { icon: <IInsert />, lines: ["插入零部件"], w: "w-[80px]", drop: true },
    { icon: <IClip />, lines: ["配合"], w: "w-[44px]" },
    { icon: <IPreview />, lines: ["零部件预", "览窗口"], w: "w-[66px]", off: true },
    { icon: <IPattern />, lines: ["线性零部件阵列"], w: "w-[114px]", drop: true },
    { icon: <ISmart />, lines: ["智能扣", "件"], w: "w-[56px]" },
    { icon: <IMove />, lines: ["移动零部件"], w: "w-[84px]", drop: true },
  ],
  [{ icon: <IShow />, lines: ["显示隐藏", "的零部件"], w: "w-[72px]" }],
  [
    { icon: <IFeat />, lines: ["装配..."], w: "w-[56px]", drop: true },
    { icon: <IRef />, lines: ["参考..."], w: "w-[55px]", drop: true },
  ],
  [{ icon: <IMotion />, lines: ["新建运", "动算例"], w: "w-[57px]" }],
  [{ icon: <IBom />, lines: ["材料明", "细表"], w: "w-[57px]" }],
  [
    { icon: <IExplode />, lines: ["爆炸视图"], w: "w-[72px]", drop: true },
    { icon: <IInstant />, lines: ["Instant3D"], w: "w-[76px]", on: true },
    { icon: <ISpeed />, lines: ["更新 Speedpak", "子装配体"], w: "w-[110px]" },
  ],
  [
    { icon: <ICamera />, lines: ["拍快照"], w: "w-[58px]" },
    { icon: <Asm />, lines: ["大型装配", "体设置"], w: "w-[68px]" },
  ],
];

function Command({ c }: { c: Cmd }) {
  return (
    <button
      type="button"
      disabled={c.off}
      className={`${c.w} ${c.on ? "border border-[#8a8a8a] bg-[#b1b1b1] pt-1" : "pt-[5px]"} ${c.off ? "text-[#bdbdbd]" : "text-[#1c1c1c]"} flex h-[82px] shrink-0 flex-col items-center`}
    >
      {c.icon}
      <span className="flex flex-col pt-px text-[15px] leading-5 whitespace-nowrap">
        {c.lines.map((l) => (
          <span key={l}>{l}</span>
        ))}
      </span>
      {c.drop && (
        <span className="mt-auto pb-2">
          <Caret />
        </span>
      )}
    </button>
  );
}

function Ribbon() {
  return (
    <section aria-label="装配体命令" className="flex h-[86px] items-start border-b border-[#8c8c8c] bg-[#f6f6f6] pt-px">
      {groups.map((g, i) => (
        <div key={i} className={`flex shrink-0 ${i < groups.length - 1 ? "border-r border-[#cfcfcf]" : ""}`}>
          {g.map((c) => (
            <Command key={c.lines[0]} c={c} />
          ))}
        </div>
      ))}
      <button type="button" aria-label="折叠" className="mt-auto mr-2 mb-2 ml-auto">
        <ChevUp c="#333" />
      </button>
    </section>
  );
}

const cmdTabs: [string, string][] = [
  ["装配体", "w-[70px]"],
  ["布局", "w-[59px]"],
  ["草图", "w-[59px]"],
  ["标注", "w-[59px]"],
  ["评估", "w-[59px]"],
  ["SOLIDWORKS 插件", "w-[161px]"],
  ["MBD", "w-[59px]"],
];

function CommandTabs() {
  return (
    <div role="tablist" className="flex h-[30px] shrink-0 text-base">
      {cmdTabs.map(([t, w], i) => (
        <button
          type="button"
          role="tab"
          key={t}
          aria-selected={i === 0}
          className={`${w} ${i === 0 ? "bg-[#f8f8f8] pb-0.5" : "border-b bg-[#d3d3d3] pb-px"} shrink-0 border-r border-[#8f8f8f] text-[#333] whitespace-nowrap`}
        >
          {t}
        </button>
      ))}
    </div>
  );
}

/* ---------- feature tree ---------- */

type Row = { t: string; icon: ReactNode; d: number; a?: "r" | "d" };
const rows: Row[] = [
  { t: "Machine_Vise (Default) <Default_Displa", icon: <Asm />, d: 0 },
  { t: "历史记录", icon: <FHistory />, d: 1, a: "r" },
  { t: "传感器", icon: <FSensor />, d: 1 },
  { t: "注解", icon: <FNote />, d: 1, a: "r" },
  { t: "方程式 ->", icon: <FEq />, d: 1 },
  { t: "前视基准面", icon: <Plane />, d: 1 },
  { t: "上视基准面", icon: <Plane />, d: 1 },
  { t: "右视基准面", icon: <Plane />, d: 1 },
  { t: "原点", icon: <Origin />, d: 1 },
  { t: "Base1<1> (Default) <<Default>_Dis", icon: <Part />, d: 1, a: "r" },
  { t: "Base2<1> (Default) <<Default>_Dis", icon: <Part />, d: 1, a: "r" },
  { t: "Jaw_Plate<1> -> (Default) <<Defaul", icon: <Part />, d: 1, a: "d" },
  { t: "Machine_Vise 中的配合", icon: <FMate />, d: 2, a: "r" },
  { t: "历史记录", icon: <FHistory />, d: 2 },
  { t: "传感器", icon: <FSensor />, d: 2 },
  { t: "注解", icon: <FNote />, d: 2, a: "r" },
  { t: "实体(1)", icon: <FBody />, d: 2, a: "r" },
  { t: "材质 <未指定>", icon: <Material />, d: 2 },
  { t: "前视基准面", icon: <Plane />, d: 2 },
  { t: "上视基准面", icon: <Plane />, d: 2 },
  { t: "右视基准面", icon: <Plane />, d: 2 },
  { t: "原点", icon: <Origin />, d: 2 },
  { t: "Boss-Extrude1{ ->}", icon: <Extrude />, d: 2, a: "r" },
  { t: "Sliding_Jaw<1> ->* (Default) <<Def", icon: <Part />, d: 1, a: "r" },
  { t: "(-) Vise_Screw<1> (Default) <<Defa", icon: <Part />, d: 1, a: "r" },
  { t: "Jaw_Plate<2> -> (Default) <<Defaul", icon: <Part />, d: 1, a: "r" },
  { t: "配合", icon: <Mates />, d: 1, a: "r" },
];
const indent = ["pl-1", "pl-2", "pl-8"];

function TreePanel() {
  const tabs: [string, ReactNode][] = [
    ["设计树", <Asm key="a" />],
    ["属性", <ListBox key="b" />],
    ["配置", <Config key="c" />],
    ["尺寸", <Target key="d" />],
    ["外观", <Ball key="e" />],
  ];
  return (
    <aside className="flex w-[327px] shrink-0 flex-col border-r border-[#a2a2a2] bg-[#f6f6f6]">
      <div className="mt-1 flex h-[22px] items-center justify-center border-y border-[#c9d2da] pr-1">
        <span className="size-1.5 rounded-full border border-[#999] bg-[#ddd]" />
      </div>
      <div className="mt-1 flex h-7 items-center">
        {tabs.map(([n, ic], i) => (
          <button
            type="button"
            key={n}
            aria-label={n}
            className={`${i === 0 ? "w-11" : "w-[42px] border-b bg-[#cfcfcf]"} flex h-7 items-center justify-center border-t border-r border-[#8f8f8f]`}
          >
            {ic}
          </button>
        ))}
        <button type="button" aria-label="更多选项卡" className="mr-1.5 ml-auto">
          <ChevR />
        </button>
      </div>
      <label className="mr-1.5 ml-1 flex h-8 items-center border border-[#cacaca] pl-0.5">
        <Ico s="size-5">
          <path d="M1 2h22v3l-8 8v10l-6-3v-7L1 5z" fill="#eee" stroke="#444" strokeWidth="1.5" />
          <path d="M1 2h22v3l-3 3H4L1 5z" fill="#2f82ae" />
        </Ico>
        <span className="pt-1"><Caret /></span>
        <input aria-label="筛选" className="min-w-0 flex-1 bg-transparent outline-none" />
      </label>
      <ul className="mr-0.5 flex h-[681px] flex-col justify-between pb-px text-base leading-6 text-[#2b2b2b]">
        {rows.map((r, i) => (
          <li key={i} className={`${indent[r.d]} flex h-[25px] shrink-0 items-center`}>
            {r.d > 0 && (
              <span className="flex w-5 shrink-0 items-center">
                {r.a === "r" && (
                  <svg viewBox="0 0 6 8" className="ml-0.5 h-2 w-[5px]" aria-hidden="true">
                    <path d="M0 0l6 4-6 4z" fill="#666" />
                  </svg>
                )}
                {r.a === "d" && (
                  <svg viewBox="0 0 8 6" className="h-[5px] w-2" aria-hidden="true">
                    <path d="M0 0h8L4 5z" fill="#444" />
                  </svg>
                )}
              </span>
            )}
            {r.icon}
            <span className="pl-1 whitespace-nowrap">{r.t}</span>
          </li>
        ))}
      </ul>
      <div className="mr-0.5 h-1 shrink-0 bg-[#3f7fa9]" />
      <div className="mt-auto mb-1.5 flex h-5 items-center bg-[#eee]">
        <button type="button" aria-label="向左滚动" className="flex w-[23px] justify-center"><ChevL /></button>
        <div className="flex h-5 flex-1">
          <div className="h-5 w-[65%] bg-[#c9c9c9]" />
        </div>
        <button type="button" aria-label="向右滚动" className="flex w-[26px] justify-center"><ChevR /></button>
      </div>
    </aside>
  );
}

/* ---------- 3D model ---------- */

function Foot({ t }: { t: string }) {
  return (
    <g transform={t}>
      <path d="M664 968Q664 946 680 943L858 925Q880 927 885 977L872 982Q862 1062 765 1070Q690 1062 680 1000Z" fill="#b6950c" />
      <path d="M680 1000Q700 1052 790 1030Q866 1005 872 950L872 990Q860 1062 765 1070Q688 1058 680 1000Z" fill="url(#footSide)" />
      <path d="M676 972L870 946Q872 1003 800 1026Q702 1046 676 985Z" fill="#c9a60e" />
      <path d="M676 960L862 938" stroke="#f3d548" strokeWidth="3" />
      <path d="M684 975Q700 1036 790 1014Q848 996 862 948" />
      <path d="M680 948L680 972L862 948L862 930" />
      <ellipse cx="768" cy="987" rx="20" ry="17" fill="#8c750d" />
    </g>
  );
}

function Vise() {
  return (
    <svg
      viewBox="0 0 1568 1110"
      preserveAspectRatio="none"
      className="absolute top-[272px] left-[513px] h-[370px] w-[680px] [&_*]:[vector-effect:non-scaling-stroke]"
      fill="none"
      stroke="#1b1a12"
      strokeWidth="1.2"
      strokeLinejoin="round"
      role="img"
      aria-label="Machine_Vise 模型"
    >
      <defs>
        <linearGradient id="rod" x1="0" y1="0" x2=".09" y2="1" gradientTransform="rotate(-4)">
          <stop offset="0" stopColor="#5c5f70" />
          <stop offset=".3" stopColor="#a9aec6" />
          <stop offset=".52" stopColor="#e2e5f6" />
          <stop offset=".75" stopColor="#a2a6bb" />
          <stop offset="1" stopColor="#454857" />
        </linearGradient>
        <linearGradient id="cyl" x1="0" y1="0" x2="0" y2="1">
          <stop offset="0" stopColor="#a98b0a" />
          <stop offset=".3" stopColor="#cba811" />
          <stop offset=".55" stopColor="#ffe530" />
          <stop offset=".75" stopColor="#dcb91c" />
          <stop offset="1" stopColor="#957c0c" />
        </linearGradient>
        <linearGradient id="cylg" x1="0" y1="0" x2="0" y2="1">
          <stop offset="0" stopColor="#8e90a2" />
          <stop offset=".6" stopColor="#d6d7e4" />
          <stop offset="1" stopColor="#9092a3" />
        </linearGradient>
        <linearGradient id="curve" x1="0" y1=".4" x2="1" y2=".6">
          <stop offset="0" stopColor="#cca80c" />
          <stop offset=".45" stopColor="#a98c09" />
          <stop offset="1" stopColor="#453a03" />
        </linearGradient>
        <linearGradient id="fillet" x1="0" y1="0" x2="0" y2="1">
          <stop offset="0" stopColor="#e9c819" />
          <stop offset=".3" stopColor="#b3950c" />
          <stop offset="1" stopColor="#8a7407" />
        </linearGradient>
        <linearGradient id="bar" x1="0" y1="0" x2="1" y2="0">
          <stop offset="0" stopColor="#c6a30d" />
          <stop offset=".55" stopColor="#fbe23a" />
          <stop offset="1" stopColor="#d5b215" />
        </linearGradient>
        <linearGradient id="dark" x1="0" y1="0" x2="0" y2="1">
          <stop offset="0" stopColor="#474955" />
          <stop offset="1" stopColor="#5f6172" />
        </linearGradient>
        <linearGradient id="shade" x1="0" y1="0" x2="0" y2="1">
          <stop offset="0" stopColor="#9b9b9b" />
          <stop offset="1" stopColor="#707070" />
        </linearGradient>
        <linearGradient id="footSide" x1="0" y1="0" x2="1" y2="0">
          <stop offset="0" stopColor="#f2d12a" />
          <stop offset=".4" stopColor="#b6960e" />
          <stop offset="1" stopColor="#5d4e06" />
        </linearGradient>
      </defs>

      <g stroke="none" fill="url(#shade)">
        <path d="M1400 296L1465 285Q1524 305 1527 350L1505 600L1492 690L1424 876L1395 600Z" />
        <path d="M155 710L468 673L468 735L145 775Z" />
        <path d="M866 416L888 355L960 346L948 406Z" />
      </g>

      <path d="M45 565Q250 538 468 514L468 608L52 655Q40 612 45 565Z" fill="url(#rod)" />
      <path d="M48 635L468 588" />
      <path d="M66 562Q64 590 86 592Q104 586 105 557Q85 563 66 562Z" fill="#85889b" />

      <path d="M488 446L498 387L615 373L615 436Z" fill="#c4a20c" />
      <path d="M615 373L672 367L672 428L615 436Z" fill="#9fa1b5" />

      <path d="M828 418L1148 381L1165 505L818 547Z" fill="#c5a30c" />
      <path d="M828 418L870 413L858 543L818 547Z" fill="#6d5c05" stroke="none" />
      <path d="M818 547L1165 505L1175 572L810 617Z" fill="#9f8609" />
      <path d="M818 547L860 542L884 610L810 617Z" fill="#66560a" stroke="none" />
      <path d="M810 617L1175 572L1180 600L805 647Z" fill="#5d4f08" />
      <path d="M888 618L1178 582L1180 600L890 634Z" fill="#a98d0a" stroke="none" />
      <path d="M805 647L1180 600L1200 722L793 772Z" fill="#c5a30c" />
      <path d="M805 647L836 643L796 752Z" fill="#6d5c05" stroke="none" />

      <path d="M1387 190L1455 575L1445 673L1412 675L1432 800L1422 890L1352 520Z" fill="#665606" />
      <path d="M1410 480L1397 575L1412 672M1410 480L1422 548L1448 668M1402 548L1422 545" />
      <path d="M1410 485L1420 546L1403 548Z" fill="#3d3403" />
      <path d="M1282 38Q1352 66 1386 170L1388 205L1355 500Q1320 405 1245 357Z" fill="url(#curve)" />
      <path d="M1270 38L1282 38L1252 360L1240 358Z" fill="#d9b619" />
      <path d="M1205 46L1270 38L1240 358L1173 363Z" fill="#c5a20b" />
      <path d="M1180 50L1205 46L1173 363L1148 366Z" fill="#9fa1b6" />
      <path d="M1180 50L1186 44L1275 35L1282 38" />

      <path d="M1175 412L1245 402Q1320 440 1338 520L1400 910L1345 920L628 1003L597 798L793 772L1225 720Z" fill="#a18708" />
      <path d="M1148 366L1173 363L1178 410L1152 413Z" fill="#c5c7d6" />
      <path d="M1173 363L1240 357L1245 403L1178 410Z" fill="url(#bar)" />
      <path d="M1152 413L1176 411L1225 720L1200 722Z" fill="#8e90a3" />
      <path d="M1240 357Q1345 400 1356 505L1425 862Q1424 902 1400 912L1338 520Q1315 440 1243 403Z" fill="url(#fillet)" />
      <path d="M1335 524L1356 508" />

      <path d="M462 740L583 728L597 798L628 1003L515 1020Z" fill="#9e8509" />
      <path d="M480 446L587 435Q582 500 593 602L470 614Q458 520 464 465Z" fill="url(#cyl)" />
      <path d="M587 435L672 425L690 592L593 602Q582 520 587 435Z" fill="url(#cylg)" />
      <path d="M474 630L593 615L583 713L462 728Z" fill="#bd9d0e" />
      <path d="M593 614L692 606L710 690L583 713Z" fill="#a2a4b8" />
      <path d="M470 614L593 601L593 615L474 630Z" fill="#e8ca35" />
      <path d="M593 601L690 592L692 606L593 615Z" fill="#c4c6d6" />
      <path d="M597 798L583 730L712 712L675 470L713 467L770 775Z" fill="#8b8d9f" />
      <path d="M462 728L583 713L583 730L464 741Z" fill="#efd445" />
      <path d="M583 713L694 699Q706 694 698 650L713 698L712 712L583 730Z" fill="#c6c8d8" />
      <path d="M470 614L462 728L515 1020" />

      <path d="M713 467L738 462L793 772L770 775Z" fill="#84869a" />
      <path d="M773 97L828 415L793 772L738 462L738 418Z" fill="url(#dark)" />
      <path d="M703 105L745 101L715 420L668 424Z" fill="#9c9eb2" />
      <path d="M745 101L773 97L738 418L715 420Z" fill="#a3a5b9" />
      <path d="M668 424L738 418L738 462L675 470Q666 450 668 424Z" fill="#c9cbdb" />
      <path d="M715 420L713 467M703 105L668 424L676 500L700 650" />
      <path d="M703 105L773 95" />

      <Foot t="" />
      <Foot t="translate(468 -57)" />
    </svg>
  );
}

function Triad() {
  return (
    <svg viewBox="0 0 64 76" className="absolute bottom-[37px] left-1 h-[76px] w-16" role="img" aria-label="坐标轴">
      <path d="M49 40 45 22" stroke="#8fd79b" strokeWidth="4" />
      <path d="M42 12l-3 9c2 3 6 3 8 0z" fill="#12551f" />
      <path d="M49 40 47 56" stroke="#b62a20" strokeWidth="4" />
      <path d="M42 55h10l-5 12z" fill="#c3201c" />
      <path d="M50 40 20 42" stroke="#1414a4" strokeWidth="4" />
      <path d="M10 43l12-5v9z" fill="#0d0d8e" />
      <text x="38" y="8" fontSize="10" fill="#6b8a6b">Y</text>
      <text x="1" y="46" fontSize="11" fill="#3a3ab8">Z</text>
      <text x="43" y="72" fontSize="9" fill="#e0604f">X</text>
    </svg>
  );
}

/* ---------- viewport ---------- */

function Viewport() {
  const side: [string, ReactNode][] = [
    ["资源", <House key="1" s="size-5" />],
    ["设计库", <Books key="2" />],
    ["文件探索器", <OpenFolder key="3" />],
    ["视图调色板", <Palette key="4" />],
    ["外观", <Ball key="5" s="size-[18px]" />],
    ["自定义属性", <ListBox key="6" />],
    ["论坛", <Squares key="7" />],
  ];
  return (
    <main className="relative min-w-0 flex-1 bg-white">
      <div className="flex h-8 items-center pl-[538px]">
        {[<Mag key="a" />, <Mag key="b" area />, <HPrev key="c" />, <HSection key="d" />, <HAnno key="e" />].map((ic, i) => (
          <QBtn key={i} w="w-[27px]" label="视图">{ic}</QBtn>
        ))}
        <QBtn w="w-[30px]" label="视图定向"><HOrient /></QBtn>
        <Drop dim />
        <QBtn w="w-[26px]" label="显示样式"><HCube /></QBtn>
        <Drop dim />
        <QBtn w="w-[26px]" label="隐藏/显示"><HEye /></QBtn>
        <Drop dim />
        <QBtn w="w-[26px]" label="编辑外观"><HAppear /></QBtn>
        <QBtn w="w-[28px]" label="应用布景"><HScene /></QBtn>
        <Drop dim />
        <QBtn w="w-[26px]" label="视图设定"><HScreen /></QBtn>
        <Drop dim />
        <div className="ml-auto flex pr-1.5">
          <QBtn w="w-7" label="左窗格">
            <Ico s="size-4"><path d="M3 3h18v18H3zM6 3v18M14 8l-5 4 5 4z" stroke="#999" strokeWidth="1.8" /></Ico>
          </QBtn>
          <QBtn w="w-7" label="右窗格">
            <Ico s="size-4"><path d="M3 3h18v18H3zM18 3v18M10 8l5 4-5 4z" stroke="#999" strokeWidth="1.8" /></Ico>
          </QBtn>
          <QBtn w="w-7" label="最小化文档"><WinMin c="#888" /></QBtn>
          <QBtn w="w-7" label="还原文档"><WinRestore c="#999" /></QBtn>
          <QBtn w="w-7" label="关闭文档"><WinClose c="#999" /></QBtn>
        </div>
      </div>
      <Vise />
      <Triad />
      <span className="absolute top-[382px] left-[561px]">
        <Cursor s="size-[26px]" />
      </span>
      <button
        type="button"
        aria-label="折叠面板"
        className="absolute top-[429px] -left-px flex h-[51px] w-3 items-center justify-center border border-l-0 border-[#a2a2a2] bg-[#f6f6f6]"
      >
        <span className="size-1.5 rounded-full border border-[#999] bg-[#ddd]" />
      </button>
      <div className="absolute top-[60px] right-0 flex h-[221px] w-[35px] flex-col">
        {side.map(([n, ic], i) => (
          <button
            type="button"
            key={n}
            aria-label={n}
            className={`${i === 0 ? "border-t bg-[#f6f6f6]" : "bg-[#cfcfcf]"} flex flex-1 items-center justify-center border-b border-l border-[#8f8f8f]`}
          >
            {ic}
          </button>
        ))}
      </div>
    </main>
  );
}

/* ---------- task pane ---------- */

function Section({ title, children }: { title: string; children: ReactNode }) {
  return (
    <section className="border-t-2 border-[#a9a9a9]">
      <h3 className="flex h-[21px] items-center justify-between pr-2 pl-1 text-sm font-bold text-[#444]">
        {title}
        <ChevUp />
      </h3>
      {children}
    </section>
  );
}
const Item = ({ icon, h = "h-[34px]", latin = false, children }: { icon: ReactNode; h?: string; latin?: boolean; children: ReactNode }) => (
  <a href="#" className={`${h} ${latin ? "text-[13px]" : "text-sm"} flex items-center gap-1 pl-px leading-[17px]`}>
    {icon}
    <span>{children}</span>
  </a>
);

function TaskPane() {
  return (
    <aside className="flex w-[233px] shrink-0 flex-col border-b-2 border-l border-b-[#3f647d] border-l-[#8f8f8f] bg-[#f6f6f6]">
      <div className="flex h-6 items-center border-b border-[#333] bg-[#acacb0] pl-2">
        <Ico s="size-4">
          <path d="M11 5l-7 7 7 7M20 5l-7 7 7 7" stroke="#222" strokeWidth="2.400" />
        </Ico>
        <h2 className="pl-2.5 text-[15px] font-bold whitespace-nowrap text-[#222]">SOLIDWORKS 资源</h2>
        <span className="ml-auto flex items-center gap-1 pr-1.5">
          <Gear s="size-[18px]" />
          <Pin c="#333" s="size-3.5" />
        </span>
      </div>
      <div className="flex flex-col pr-8 pl-4 text-[#5c5c5c]">
        <a href="#" className="mt-8 flex h-9 items-center gap-1.5 text-[13px] leading-[17px]">
          <House s="size-5" />
          <span>欢迎使用</span>
          <span className="pl-1">SOLIDWORKS</span>
        </a>
        <div className="h-7" />
        <Section title="SOLIDWORKS 工具">
          <Item icon={<SwTag />}>属性标签编制程序</Item>
          <Item icon={<SwRx />} latin>SOLIDWORKS Rx</Item>
          <Item icon={<SwRx />}>性能基准测试</Item>
          <Item icon={<Compare />} h="h-[33px]">比较我的评分</Item>
          <Item icon={<SwWiz />} latin>SOLIDWORKS 设置向导</Item>
          <Item icon={<SwUser />} h="h-[33px]">我的产品</Item>
        </Section>
        <div className="h-8" />
        <Section title="在线资源">
          <Item icon={<Globe />} h="h-11" latin>
            3DEXPERIENCE
            <br />
            Marketplace
          </Item>
          <Item icon={<Hands />} h="h-8" latin>Partner Solutions</Item>
        </Section>
        <div className="h-8" />
        <Section title="订阅服务">
          <Item icon={<GlobeSw />}>订阅服务</Item>
        </Section>
      </div>
    </aside>
  );
}

/* ---------- bottom bars ---------- */

function BottomTabs() {
  const nav: [string, string][] = [
    ["第一个", "M5 4v16M19 4v16l-11-8z"],
    ["上一个", "M17 4v16L7 12z"],
    ["下一个", "M7 4v16l10-8z"],
    ["最后一个", "M19 4v16M5 4v16l11-8z"],
  ];
  return (
    <div className="flex h-[22px] shrink-0 border-t border-b border-[#8f8f8f] bg-[#f6f6f6] text-base leading-5">
      {nav.map(([n, d]) => (
        <button type="button" key={n} aria-label={n} className="flex w-[21px] items-center justify-center border border-[#81829f] bg-[#a6a7be] first:ml-0.5">
          <Ico s="size-3"><path d={d} fill="#7c7e9c" stroke="#7c7e9c" strokeWidth="2" /></Ico>
        </button>
      ))}
      <button type="button" className="w-[65px] border-r border-[#8f8f8f] bg-[#f8f8f8] pl-1.5">模型</button>
      <button type="button" className="w-20 border-r border-[#8f8f8f] bg-[#d0d0d0]">3D 视图</button>
      <button type="button" className="w-[142px] border-r border-[#8f8f8f] bg-[#d0d0d0] pr-2.5">Motion Study 1</button>
    </div>
  );
}

function StatusBar() {
  return (
    <footer className="flex h-5 shrink-0 items-start overflow-hidden bg-[#e6e6e6] pl-0.5 text-base leading-6 text-[#222]">
      <span>SOLIDWORKS Premium 2023 SP3.0</span>
      <span className="ml-auto">欠定义</span>
      <span className="pl-5">在编辑 装配体</span>
      <span className="pl-[129px]">自定义</span>
      <span className="flex h-6 items-center pl-6"><ChevUp s="size-2" c="#333" /></span>
      <span className="pr-0.5 pl-[25px]">
        <Ico s="size-[18px]">
          <path d="M2 4l10-3 11 11-5 10L4 13z" fill="#eee" stroke="#444" strokeWidth="1.6" />
          <path d="M6 6l4-1 4 4-4 2zM12 13l6-3" stroke="#444" strokeWidth="1.4" />
        </Ico>
      </span>
    </footer>
  );
}

export default function App() {
  return (
    <div className="flex h-screen flex-col overflow-hidden bg-white font-['Noto_Sans','Noto_Sans_CJK_SC',sans-serif] text-[#222]">
      <TitleBar />
      <Ribbon />
      <div className="flex min-h-0 flex-1">
        <div className="flex min-w-0 flex-1 flex-col">
          <div className="flex min-h-0 flex-1">
            <div className="flex shrink-0 flex-col">
              <div className="flex w-[327px]">
                <div className="relative z-10">
                  <CommandTabs />
                </div>
              </div>
              <div className="flex min-h-0 flex-1">
                <TreePanel />
              </div>
            </div>
            <Viewport />
          </div>
          <BottomTabs />
        </div>
        <TaskPane />
      </div>
      <StatusBar />
    </div>
  );
}
